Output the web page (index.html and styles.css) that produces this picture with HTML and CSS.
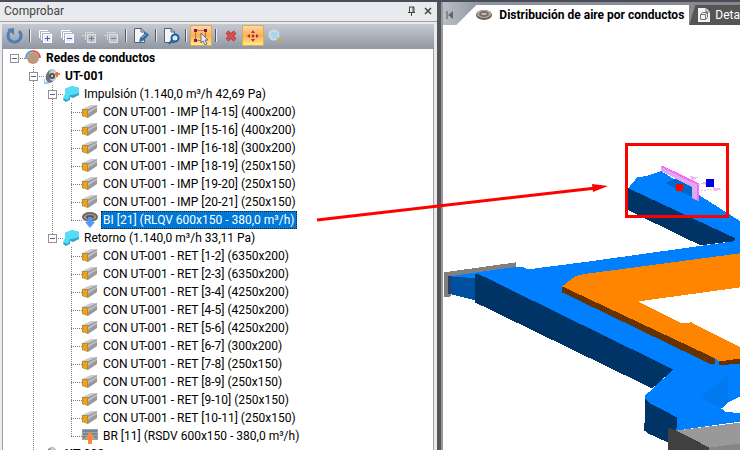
FILE: index.html
```
<!DOCTYPE html>
<html lang="es">
<head>
  <meta charset="UTF-8" />
  <meta name="viewport" content="width=device-width, initial-scale=1.0" />
  <title>Distribución de aire por conductos</title>
  <link rel="stylesheet" href="styles.css">
</head>
<body>
  <!-- Shared icons -->
  <svg class="sprite" aria-hidden="true">
    <symbol id="duct" viewBox="0 0 16 16">
      <path d="M0 5L9 1L15 1L6 5Z" fill="#c9c9cf"/>
      <path d="M6 5L15 1V8L6 14Z" fill="#97979c"/>
      <path d="M6 7L15 2V4L6 10Z" fill="#bcbcc1"/>
      <path d="M0 5H6V14L0 12Z" fill="#b98a35"/>
      <path d="M1 6H5V13L1 12Z" fill="#f0a411"/>
    </symbol>
    <symbol id="elbow" viewBox="0 0 16 16">
      <path d="M2 3L9 0L16 2V9L10 12L7 11V14L3 16L0 14L2 9Z" fill="#2ba9c9"/>
      <path d="M2 3L9 0L16 2V7L10 9L7 9L5 14L0 12L2 8Z" fill="#54dcf8"/>
    </symbol>
    <symbol id="fan" viewBox="0 0 16 16">
      <path d="M0 11V15H5" fill="none" stroke="#4a90e2"/>
      <ellipse cx="7" cy="8" rx="5" ry="7" fill="#66757e" transform="rotate(20 7 8)"/>
      <ellipse cx="9" cy="7" rx="4" ry="6" fill="#c6cdd1"/>
      <circle cx="8" cy="8" r="3" fill="#4c565c"/>
      <circle cx="8" cy="8" r="1" fill="#eee"/>
      <path d="M11 6H16M13 4V9" stroke="#f4743b" stroke-width="2"/>
    </symbol>
  </svg>

  <div class="app">
    <section class="panel">
      <header class="panel-header">
        <h1>Comprobar</h1>
        <button class="plain" aria-label="Fijar"><svg width="9" height="10" viewBox="0 0 9 10"><path d="M2 1H7M2.500 1V6M6 1V6M7 1V6M1 6.500H8M4.500 7V10" fill="none" stroke="#444"/></svg></button>
        <button class="plain" aria-label="Cerrar"><svg width="8" height="8" viewBox="0 0 8 8"><path d="M1 1L7 7M7 1L1 7" stroke="#444" stroke-width="1.500"/></svg></button>
      </header>

      <div class="toolbar">
        <button class="tool first" aria-label="Actualizar"><svg viewBox="0 0 18 18"><path d="M4 4A6.500 6.500 0 1 0 13 4" fill="none" stroke="#4a80b5" stroke-width="3"/><path d="M1 2L8 1V8Z" fill="#4a80b5"/></svg></button>
        <span class="sep"></span>
        <button class="tool" aria-label="Expandir todo"><svg viewBox="0 0 18 18"><path d="M3.500 11V3.500H12M5.500 13V5.500H14" fill="none" stroke="#fff"/><rect x="7.500" y="7.500" width="8" height="8" fill="#e6edf8" stroke="#fff"/><path d="M9 11.500H14M11.500 9V14" stroke="#3d64c5"/></svg></button>
        <button class="tool" aria-label="Contraer todo"><svg viewBox="0 0 18 18"><path d="M3.500 11V3.500H12M5.500 13V5.500H14" fill="none" stroke="#fff"/><rect x="7.500" y="7.500" width="8" height="8" fill="#e6edf8" stroke="#fff"/><path d="M9 11.500H14" stroke="#3d64c5"/></svg></button>
        <button class="tool" aria-label="Expandir" disabled><svg viewBox="0 0 18 18"><path d="M2 8.500H5M5.500 13V5.500H14" fill="none" stroke="#d4d8dd"/><rect x="7.500" y="7.500" width="8" height="8" fill="#bfc4ca" stroke="#dde0e4"/><path d="M9 11.500H14M11.500 9V14" stroke="#747b86"/></svg></button>
        <button class="tool" aria-label="Contraer" disabled><svg viewBox="0 0 18 18"><path d="M2 8.500H5M5.500 13V5.500H14" fill="none" stroke="#d4d8dd"/><rect x="7.500" y="7.500" width="8" height="8" fill="#bfc4ca" stroke="#dde0e4"/><path d="M9 11.500H14" stroke="#747b86"/></svg></button>
        <span class="sep"></span>
        <button class="tool" aria-label="Editar"><svg viewBox="0 0 18 18"><path d="M2.500 1.500H9L12.500 5V15.500H2.500Z" fill="#f4f5f7" stroke="#59606a"/><path d="M9 1V5H13" fill="none" stroke="#59606a"/><path d="M7 15L8 11L14 5L17 8L11 14Z" fill="#2f6ca8"/><path d="M10 11L14 7" stroke="#8fbbe2"/></svg></button>
        <span class="sep"></span>
        <button class="tool" aria-label="Vista previa"><svg viewBox="0 0 18 18"><path d="M2.500 1.500H9L12.500 5V15.500H2.500Z" fill="#f4f5f7" stroke="#59606a"/><path d="M9 1V5H13" fill="none" stroke="#59606a"/><circle cx="13" cy="11" r="3.500" fill="#d8e9f8" stroke="#1c5fa3" stroke-width="2"/><path d="M10 13L7 17" stroke="#1c5fa3" stroke-width="2"/></svg></button>
        <span class="sep"></span>
        <button class="tool active" aria-label="Seleccionar"><svg viewBox="0 0 18 18"><path d="M3.500 3.500H13.500V13.500H3.500Z" fill="none" stroke="#7d1750" stroke-dasharray="1 1"/><path d="M2 2H5V5H2ZM12 2H15V5H12ZM2 12H5V15H2Z" fill="#861457"/><path d="M9 6V16L11 14L13 18L15 17L13 13H16Z" fill="#e7e9ee" stroke="#6a7182"/></svg></button>
        <span class="sep"></span>
        <button class="tool" aria-label="Borrar"><svg viewBox="0 0 18 18"><path d="M5 5L13 13M13 5L5 13" stroke="#b9363b" stroke-width="4"/><path d="M5 5L13 13M13 5L5 13" stroke="#dc5457" stroke-width="2"/></svg></button>
        <button class="tool active" aria-label="Mover"><svg viewBox="0 0 18 18"><g fill="#b52a4f"><path d="M9 3L11 6H7ZM9 15L11 12H7ZM3 9L6 7V11ZM15 9L12 7V11Z"/><circle cx="9" cy="9" r="1.500"/></g></svg></button>
        <button class="tool" aria-label="Buscar"><svg viewBox="0 0 18 18"><circle cx="8" cy="8" r="4.500" fill="#a9d5ec" stroke="#d3dbe1" stroke-width="2"/><path d="M11 11L14 14" stroke="#a7adb5" stroke-width="2"/><circle cx="14" cy="14" r="1.500" fill="#f2a516"/></svg></button>
      </div>

      <nav class="tree-box">
        <ul class="tree">
          <li>
            <div class="row"><button class="toggle" aria-label="Contraer"></button><svg class="icon" viewBox="0 0 16 16"><circle cx="8" cy="8" r="6" fill="#b79b7c"/><path d="M1 9A7 7 0 0 1 7 1" fill="none" stroke="#3a86d8" stroke-width="1.500"/><path d="M7 1A7 7 0 0 1 15 8" fill="none" stroke="#e04444" stroke-width="1.500"/></svg><b class="label">Redes de conductos</b></div>
            <ul>
              <li>
                <div class="row"><button class="toggle" aria-label="Contraer"></button><svg class="icon"><use href="#fan"/></svg><b class="label">UT-001</b></div>
                <ul>
                  <li>
                    <div class="row"><button class="toggle" aria-label="Contraer"></button><svg class="icon"><use href="#elbow"/></svg><span class="label">Impulsión (1.140,0 m³/h 42,69 Pa)</span></div>
                    <ul>
                      <li><div class="row leaf"><svg class="icon"><use href="#duct"/></svg><span class="label">CON UT-001 - IMP [14-15] (400x200)</span></div></li>
                      <li><div class="row leaf"><svg class="icon"><use href="#duct"/></svg><span class="label">CON UT-001 - IMP [15-16] (400x200)</span></div></li>
                      <li><div class="row leaf"><svg class="icon"><use href="#duct"/></svg><span class="label">CON UT-001 - IMP [16-18] (300x200)</span></div></li>
                      <li><div class="row leaf"><svg class="icon"><use href="#duct"/></svg><span class="label">CON UT-001 - IMP [18-19] (250x150)</span></div></li>
                      <li><div class="row leaf"><svg class="icon"><use href="#duct"/></svg><span class="label">CON UT-001 - IMP [19-20] (250x150)</span></div></li>
                      <li><div class="row leaf"><svg class="icon"><use href="#duct"/></svg><span class="label">CON UT-001 - IMP [20-21] (250x150)</span></div></li>
                      <li><div class="row leaf"><svg class="icon" viewBox="0 0 16 16"><ellipse cx="8" cy="5" rx="8" ry="5" fill="#716860"/><ellipse cx="8" cy="5" rx="6" ry="3" fill="#a89f96"/><ellipse cx="8" cy="5" rx="4" ry="2" fill="#5d554e"/><path d="M6 5H10V10H13L8 16L3 10H6Z" fill="#4d9bff"/></svg><span class="label selected">BI [21] (RLQV 600x150 - 380,0 m³/h)</span></div></li>
                    </ul>
                  </li>
                  <li>
                    <div class="row"><button class="toggle" aria-label="Contraer"></button><svg class="icon"><use href="#elbow"/></svg><span class="label">Retorno (1.140,0 m³/h 33,11 Pa)</span></div>
                    <ul>
                      <li><div class="row leaf"><svg class="icon"><use href="#duct"/></svg><span class="label">CON UT-001 - RET [1-2] (6350x200)</span></div></li>
                      <li><div class="row leaf"><svg class="icon"><use href="#duct"/></svg><span class="label">CON UT-001 - RET [2-3] (6350x200)</span></div></li>
                      <li><div class="row leaf"><svg class="icon"><use href="#duct"/></svg><span class="label">CON UT-001 - RET [3-4] (4250x200)</span></div></li>
                      <li><div class="row leaf"><svg class="icon"><use href="#duct"/></svg><span class="label">CON UT-001 - RET [4-5] (4250x200)</span></div></li>
                      <li><div class="row leaf"><svg class="icon"><use href="#duct"/></svg><span class="label">CON UT-001 - RET [5-6] (4250x200)</span></div></li>
                      <li><div class="row leaf"><svg class="icon"><use href="#duct"/></svg><span class="label">CON UT-001 - RET [6-7] (300x200)</span></div></li>
                      <li><div class="row leaf"><svg class="icon"><use href="#duct"/></svg><span class="label">CON UT-001 - RET [7-8] (250x150)</span></div></li>
                      <li><div class="row leaf"><svg class="icon"><use href="#duct"/></svg><span class="label">CON UT-001 - RET [8-9] (250x150)</span></div></li>
                      <li><div class="row leaf"><svg class="icon"><use href="#duct"/></svg><span class="label">CON UT-001 - RET [9-10] (250x150)</span></div></li>
                      <li><div class="row leaf"><svg class="icon"><use href="#duct"/></svg><span class="label">CON UT-001 - RET [10-11] (250x150)</span></div></li>
                      <li><div class="row leaf"><svg class="icon" viewBox="0 0 16 16"><rect x="0" y="1" width="16" height="11" fill="#a5a29c"/><path d="M1 3H15M1 6H15M1 9H15" stroke="#376f9f"/><path d="M6 16V10H3L8 4L13 10H10V16Z" fill="#ff8a3c"/></svg><span class="label">BR [11] (RSDV 600x150 - 380,0 m³/h)</span></div></li>
                    </ul>
                  </li>
                </ul>
              </li>
              <li>
                <div class="row"><button class="toggle" aria-label="Expandir"></button><svg class="icon"><use href="#fan"/></svg><b class="label">UT-002</b></div>
              </li>
            </ul>
          </li>
        </ul>
      </nav>
    </section>

    <main class="viewer">
      <div class="tabs">
        <button class="scroll" aria-label="Primera"><svg width="8" height="8" viewBox="0 0 8 8"><path d="M1 0V8" stroke="#555" stroke-width="1"/><path d="M7 0V8L2 4Z" fill="#666"/></svg></button>
        <button class="tab current"><svg width="16" height="12" viewBox="0 0 16 12"><ellipse cx="8" cy="6" rx="8" ry="5" fill="#6d625a"/><ellipse cx="8" cy="5" rx="7" ry="4" fill="#b5aaa2"/><ellipse cx="8" cy="5" rx="5" ry="3" fill="#786c64"/><ellipse cx="8" cy="5" rx="3" ry="1" fill="#cbc2ba"/></svg>Distribución de aire por conductos</button>
        <button class="tab other"><svg width="12" height="14" viewBox="0 0 12 14"><path d="M0 0H8L12 4V14H0Z" fill="#f4f4f4"/><path d="M8 0V4H12" fill="none" stroke="#777"/><path d="M2.500 6.500H7.500V11.500H2.500ZM4.500 4.500H9.500V9.500M2.500 6.500L4.500 4.500M7.500 6.500L9.500 4.500M7.500 11.500L9.500 9.500" fill="none" stroke="#777"/></svg>Deta</button>
      </div>

      <svg class="scene" viewBox="443 25 297 425" preserveAspectRatio="xMinYMin slice" shape-rendering="crispEdges">
        <!-- supply ducts -->
        <path d="M444 272L516 262V268L451 277V296L444 297Z" fill="#808080"/>
        <path d="M449 276L512 267L523 267L528 269L590 261L733 241L628 188L637 177L645 176L661 171L740 221V421L676 430L645 401V395L673 369L479 278Z" fill="#0080ff"/>
        <path d="M628 188L735 238L733 241L700 245L628 210Z" fill="#003366"/>
        <path d="M628 211L700 245L600 259L528 269L523 267L516 267V262L560 230Z" fill="#fff"/>
        <path d="M451 276L478 278L479 301L451 294Z" fill="#0050a0"/>
        <path d="M448 276H451V294H448Z" fill="#2b3f66"/>
        <path d="M475 274H479L673 369L652 388L475 302Z" fill="#003366"/>
        <path d="M645 398L650 403L677 417L676 430L668 442L648 433L644 430Z" fill="#003366"/>
        <path d="M728 374L700 397L722 408L728 400Z" fill="#0078ee"/>
        <path d="M721 408L728 402L740 396V413L725 411Z" fill="#fff"/>
        <!-- return ducts -->
        <path d="M562 286L575 276L582 274L740 253V287L638 301L682 323L691 322L740 347V358L719 361L715 358Z" fill="#ff8500"/>
        <path d="M562 286L715 358V364H711L562 292ZM719 361L740 358V363L719 365Z" fill="#663300"/>
        <path d="M638 301L740 287V347L691 322L682 323Z" fill="#fff"/>
        <!-- unit -->
        <path d="M676 430L740 422V450H709Z" fill="#999"/>
        <path d="M668 427L676 430L709 447V450H668Z" fill="#404040"/>
        <path d="M709 447L740 443V450H709Z" fill="#858585"/>
        <!-- selected grille -->
        <path d="M665 183L676 178L692 187V197Z" fill="#0068c8"/>
        <path d="M661 166L698 184V201L692 198V187L661 171Z" fill="#dcaaf0"/>
        <path d="M661 166L698 184V201" fill="none" stroke="#ff66ff" stroke-width="2"/>
        <path d="M698 191L720 188M698 184L706 183" stroke="#f7b3ee" stroke-dasharray="2 1"/>
        <path d="M690 176L698 177L692 180ZM701 183L707 181V185ZM713 187L722 189L714 191Z" fill="#f7b3ee"/>
        <rect x="676" y="184" width="7" height="7" fill="#ff0000"/>
        <rect x="706" y="179" width="8" height="8" fill="#0000e0"/>
        <rect x="626" y="144" width="101" height="72" fill="none" stroke="#ff0000" stroke-width="3"/>
      </svg>
    </main>
  </div>

  <!-- Callout arrow from the selected item to its grille -->
  <svg class="callout" width="740" height="450" viewBox="0 0 740 450" aria-hidden="true">
    <path d="M317 220L596 188" stroke="#ff0000" stroke-width="3"/>
    <path d="M592 184L608 186L593 192Z" fill="#ff0000"/>
  </svg>
</body>
</html>
```
FILE: styles.css
```
* {
  box-sizing: border-box;
}
html, body {
  margin: 0;
  padding: 0;
  height: 100%;
  overflow: hidden;
}
body {
  background: #555;
  color: #000;
  font-family: Roboto, "Noto Sans", sans-serif;
  font-size: 12px;
}
button {
  border: none;
  padding: 0;
  background: none;
  font: inherit;
}
svg {
  display: block;
  flex: none;
}
.sprite {
  position: absolute;
  width: 0;
  height: 0;
}
.app {
  display: grid;
  grid-template-columns: 59fr 41fr;
  height: 100vh;
  border-top: 2px solid #4a4d59;
}
/* Left panel */
.panel {
  display: flex;
  flex-direction: column;
  min-width: 0;
  min-height: 0;
  background: #e9eaed;
}
.panel-header {
  display: flex;
  align-items: center;
  gap: 8px;
  height: 20px;
  padding: 0 5px 2px 4px;
  border-bottom: 1px solid #a0a0a0;
}
.panel-header h1 {
  flex: 1;
  margin: 0;
  font-size: 12px;
  font-weight: normal;
  color: #444;
}
.toolbar {
  display: flex;
  align-items: center;
  height: 25px;
  margin: 2px 3px 0 2px;
  padding: 0 2px 2px;
  background: linear-gradient(#c6cad1, #9097a2);
}
.tool {
  display: flex;
  align-items: center;
  justify-content: center;
  width: 22px;
  height: 21px;
}
.tool svg {
  width: 18px;
  height: 18px;
}
.tool.active {
  border: 1px solid #d9a95c;
  background: linear-gradient(#fcd9a4, #ffb04d 50%, #ffe98d);
}
.sep {
  width: 2px;
  height: 13px;
  margin: 0 3px;
  border-left: 1px solid #555b66;
  border-right: 1px solid #e8eaee;
}
/* Tree */
.tree-box {
  flex: 1;
  min-height: 0;
  overflow: hidden;
  margin: 0 3px 0 2px;
  border-left: 1px solid #a0a0a0;
  border-right: 1px solid #a0a0a0;
  background: #fff;
}
.tree, .tree ul {
  margin: 0;
  padding: 0;
  list-style: none;
}
.tree {
  padding-left: 7px;
}
.tree ul {
  padding-left: 19px;
}
.tree ul > li {
  background: repeating-linear-gradient(#808080 0 1px, transparent 1px 2px) 4px 0 / 1px 100% no-repeat;
}
.tree ul > li:last-child {
  background-size: 1px 10px;
}
.row {
  display: flex;
  align-items: center;
  height: 18px;
  background: repeating-linear-gradient(90deg, #808080 0 1px, transparent 1px 2px) 4px 9px / 11px 1px no-repeat;
}
.row.leaf {
  padding-left: 15px;
}
.toggle {
  width: 9px;
  height: 9px;
  margin-right: 6px;
  border: 1px solid #919191;
  background: linear-gradient(#4b63a7, #4b63a7) center / 5px 1px no-repeat #fff;
}
.icon {
  width: 16px;
  height: 16px;
}
.label {
  margin-left: 3px;
  padding: 0 2px;
  line-height: 18px;
  white-space: nowrap;
}
.label.selected {
  background: #0078d7;
  color: #fff;
  outline: 1px dotted #222;
  outline-offset: -1px;
}
/* Right panel */
.viewer {
  display: flex;
  flex-direction: column;
  min-width: 0;
  min-height: 0;
  margin-left: 4px;
  border-left: 2px solid #999;
  background: #fff;
}
.tabs {
  display: flex;
  height: 23px;
  padding-top: 3px;
  overflow: hidden;
  background: linear-gradient(90deg, #b9bec7, #8d939e 40px, #888);
}
.scroll {
  width: 19px;
  padding-left: 3px;
}
.tab {
  display: flex;
  align-items: center;
  flex: none;
  white-space: nowrap;
}
.tab.current {
  gap: 7px;
  padding: 0 5px 0 20px;
  background: #fff;
  clip-path: polygon(20px 0, 100% 0, 100% 100%, 0 100%);
  font-weight: bold;
}
.tab.other {
  flex: 1 0 auto;
  gap: 5px;
  padding-left: 9px;
  background: #555;
  color: #fff;
  clip-path: polygon(6px 0, 100% 0, 100% 100%, 0 100%);
}
.scene {
  flex: 1;
  width: 100%;
  min-height: 0;
}
.callout {
  position: absolute;
  top: 0;
  left: 0;
  pointer-events: none;
}
```
